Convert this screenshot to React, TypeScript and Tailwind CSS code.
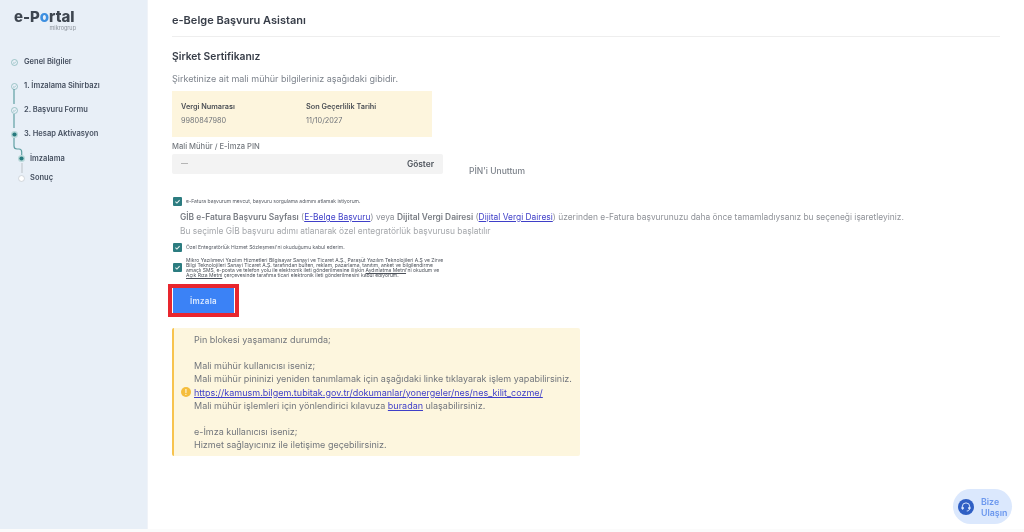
import React from "react";

function Check({ className }: { className?: string }) {
  return (
    <span className={"flex h-[9px] w-[9px] shrink-0 items-center justify-center rounded-[1px] bg-[#2c7c80] " + (className ?? "")}>
      <svg viewBox="0 0 10 10" className="h-[7px] w-[7px]" fill="none" stroke="#e6f2f2" strokeWidth="1.5">
        <path d="M2 5.2 4.2 7.3 8 3" />
      </svg>
    </span>
  );
}

function StepIcon({ kind }: { kind: "done" | "active" | "todo" }) {
  if (kind === "done")
    return (
      <svg viewBox="0 0 10 10" className="h-[7px] w-[7px] shrink-0" fill="none" stroke="#74aeb0" strokeWidth="0.9">
        <circle cx="5" cy="5" r="4.3" />
        <path d="M3 5.1 4.5 6.5 7 3.8" />
      </svg>
    );
  if (kind === "active")
    return (
      <svg viewBox="0 0 10 10" className="h-[7px] w-[7px] shrink-0">
        <circle cx="5" cy="5" r="5" fill="#b9d8d9" />
        <circle cx="5" cy="5" r="3" fill="#277a7e" />
      </svg>
    );
  return (
    <svg viewBox="0 0 10 10" className="h-[7px] w-[7px] shrink-0">
      <circle cx="5" cy="5" r="4.2" fill="#fff" stroke="#c3c9cf" strokeWidth="1" />
    </svg>
  );
}

function Step({ label, kind, sub, h }: { label: string; kind: "done" | "active" | "todo"; sub?: boolean; h: string }) {
  return (
    <div className={"flex items-center " + h + (sub ? " pl-[18px] gap-[5px]" : " pl-[10.5px] gap-[6.5px]")}>
      <StepIcon kind={kind} />
      <span className="whitespace-nowrap text-[7.5px] font-semibold text-[#465060]">{label}</span>
    </div>
  );
}

function A({ children }: { children: React.ReactNode }) {
  return <a className="text-[#3f3fc8] underline">{children}</a>;
}

export default function App() {
  return (
    <div className="flex h-[532px] w-[1024px] overflow-hidden bg-[#fbfbfb] text-[#3d4350] blur-[0.3px] [font-family:Inter,'Noto_Sans',sans-serif]">
      <aside className="relative h-[529px] w-[148px] shrink-0 border-r border-[#f0f3f8] bg-[#e8eff7]">
        <div className="ml-[14px] mt-[9px] flex w-[62px] flex-col items-end">
          <div className="w-full whitespace-nowrap text-[15px] font-extrabold leading-[16px] text-[#3e4650]">
            e-P<span className="text-[#3d8fe0]">o</span>rtal
          </div>
          <div className="mt-[-0.5px] text-[5.5px] leading-[7px] text-[#8a919a]">mikrogrup</div>
        </div>
        <div className="mt-[18.5px] flex flex-col">
          <Step label="Genel Bilgiler" kind="done" h="h-[24px]" />
          <Step label="1. İmzalama Sihirbazı" kind="done" h="h-[24px]" />
          <Step label="2. Başvuru Formu" kind="done" h="h-[24px]" />
          <Step label="3. Hesap Aktivasyon" kind="active" h="h-[24px]" />
          <Step label="İmzalama" kind="active" sub h="h-[25px]" />
          <Step label="Sonuç" kind="todo" sub h="h-[14px]" />
        </div>
        <svg className="absolute left-0 top-0 h-[200px] w-[40px]" viewBox="0 0 40 200" fill="none">
          <path d="M14 89V104M14 114V128M14 138V146Q14 149 17 149H19Q21.7 149 21.7 152V155" stroke="#5f9fa3" strokeWidth="1.2" />
          <path d="M22 163V173" stroke="#c3c9cf" strokeWidth="1.2" />
        </svg>
      </aside>

      <main className="relative h-[529px] min-w-0 flex-1 bg-white pl-[24px] pr-[24px]">
        <div className="flex h-[37px] items-end border-b border-[#eeeeee] pb-[9px]">
          <h1 className="text-[11px] font-semibold leading-[14px] text-[#373d48]">e-Belge Başvuru Asistanı</h1>
        </div>
        <h2 className="mt-[12px] text-[10.3px] font-semibold leading-[14px] text-[#373d48]">Şirket Sertifikanız</h2>
        <p className="mt-[10px] text-[9px] leading-[12px] text-[#7d838c]">Şirketinize ait mali mühür bilgileriniz aşağıdaki gibidir.</p>

        <div className="mt-[6px] flex h-[46px] w-[260px] flex-col justify-center bg-[#fdf5dd] pl-[9px]">
          <div className="flex text-[7.3px] font-semibold leading-[10px] text-[#4b4f55]">
            <span className="w-[125px]">Vergi Numarası</span>
            <span>Son Geçerlilik Tarihi</span>
          </div>
          <div className="mt-[4.5px] flex text-[7.3px] leading-[10px] text-[#6e7278]">
            <span className="w-[125px]">9980847980</span>
            <span>11/10/2027</span>
          </div>
        </div>

        <div className="mt-[5px] text-[7.6px] font-medium leading-[10px] text-[#74797f]">Mali Mühür / E-İmza PIN</div>
        <div className="flex items-end">
          <div className="mt-[2px] flex h-[20px] w-[271px] items-center justify-between rounded-[2px] bg-[#f3f3f3] pl-[9px] pr-[9px]">
            <span className="text-[7px] text-[#8a8a8a]">—</span>
            <span className="text-[8.4px] font-semibold text-[#4e545c]">Göster</span>
          </div>
          <span className="ml-[26px] mb-[-2px] text-[8.5px] font-medium leading-[10px] text-[#7c828a]">PİN'i Unuttum</span>
        </div>

        <div className="mt-[23px] flex items-center gap-[4px] pl-[1px]">
          <Check />
          <span className="text-[5px] leading-[9px] text-[#555a63]">e-Fatura başvurum mevcut, başvuru sorgulama adımını atlamak istiyorum.</span>
        </div>
        <p className="mt-[5px] whitespace-nowrap pl-[8px] text-[8.42px] leading-[12px] text-[#8f9298]">
          <b className="font-semibold text-[#797d84]">GİB e-Fatura Başvuru Sayfası</b> (<A>E-Belge Başvuru</A>) veya{" "}
          <b className="font-semibold text-[#797d84]">Dijital Vergi Dairesi</b> (<A>Dijital Vergi Dairesi</A>) üzerinden e-Fatura başvurunuzu daha önce tamamladıysanız bu seçeneği işaretleyiniz.
        </p>
        <p className="mt-[2px] pl-[8px] text-[8.42px] leading-[12px] text-[#a4a7ab]">Bu seçimle GİB başvuru adımı atlanarak özel entegratörlük başvurusu başlatılır</p>

        <div className="mt-[6px] flex items-center gap-[4px] pl-[1px]">
          <Check />
          <span className="text-[5px] leading-[9px] text-[#555a63]">Özel Entegratörlük Hizmet Sözleşmesi'ni okuduğumu kabul ederim.</span>
        </div>
        <div className="mt-[5.5px] flex items-center gap-[4px] pl-[1px]">
          <Check />
          <p className="w-[258px] text-[5px] leading-[5.2px] text-[#4b5059]">
            Mikro Yazılımevi Yazılım Hizmetleri Bilgisayar Sanayi ve Ticaret A.Ş., Paraşüt Yazılım Teknolojileri A.Ş ve Zirve Bilgi Teknolojileri Sanayi Ticaret A.Ş. tarafından bülten, reklam, pazarlama, tanıtım, anket ve bilgilendirme amaçlı SMS, e-posta ve telefon yolu ile elektronik ileti gönderilmesine ilişkin <u>Aydınlatma Metni</u>'ni okudum ve <u>Açık Rıza Metni</u> çerçevesinde tarafıma ticari elektronik ileti gönderilmesini kabul ediyorum.
          </p>
        </div>

        <div className="ml-[-4px] mt-[6px] w-fit border-[4px] border-[#e8262e] bg-white px-[1px]">
          <button className="flex h-[25px] w-[61px] items-center justify-center bg-[#3b82f6] text-[8px] font-semibold tracking-[0.3px] text-[#dbe9ff]">İmzala</button>
        </div>

        <div className="relative mt-[11px] w-[408px] rounded-[2px] border-l-2 border-[#f7c34e] bg-[#fdf6de] pb-[4.5px] pl-[20px] pt-[4.4px] text-[9px] leading-[13.2px] text-[#72767c]">
          <span className="absolute left-[7px] top-[59px] flex h-[10px] w-[10px] items-center justify-center rounded-full bg-[#f5bd3c] text-[7px] font-bold leading-none text-[#fdf6de]">!</span>
          <p>Pin blokesi yaşamanız durumda;</p>
          <p>&nbsp;</p>
          <p>Mali mühür kullanıcısı iseniz;</p>
          <p>Mali mühür pininizi yeniden tanımlamak için aşağıdaki linke tıklayarak işlem yapabilirsiniz.</p>
          <p><A>https://kamusm.bilgem.tubitak.gov.tr/dokumanlar/yonergeler/nes/nes_kilit_cozme/</A></p>
          <p>Mali mühür işlemleri için yönlendirici kılavuza <A>buradan</A> ulaşabilirsiniz.</p>
          <p>&nbsp;</p>
          <p>e-İmza kullanıcısı iseniz;</p>
          <p>Hizmet sağlayıcınız ile iletişime geçebilirsiniz.</p>
        </div>

        <div className="absolute bottom-[5px] right-[12px] flex h-[35px] w-[59px] items-center gap-[7px] rounded-[18px] bg-[#dbe8fd] pl-[5px]">
          <span className="flex h-[16px] w-[16px] shrink-0 items-center justify-center rounded-full bg-[#2f5fc4]">
            <svg viewBox="0 0 16 16" className="h-[12px] w-[12px]" fill="none" stroke="#dbe8fd" strokeWidth="1.3">
              <path d="M3 9V7.5a5 5 0 0 1 10 0V9" />
              <rect x="2.5" y="8" width="2" height="3" rx="1" fill="#dbe8fd" />
              <rect x="11.5" y="8" width="2" height="3" rx="1" fill="#dbe8fd" />
              <path d="M12.5 11c0 1.5-1.5 2.3-3.5 2.3" />
            </svg>
          </span>
          <span className="text-[8.8px] font-semibold leading-[11px] text-[#6b97ee]">Bize<br />Ulaşın</span>
        </div>
      </main>
    </div>
  );
}
